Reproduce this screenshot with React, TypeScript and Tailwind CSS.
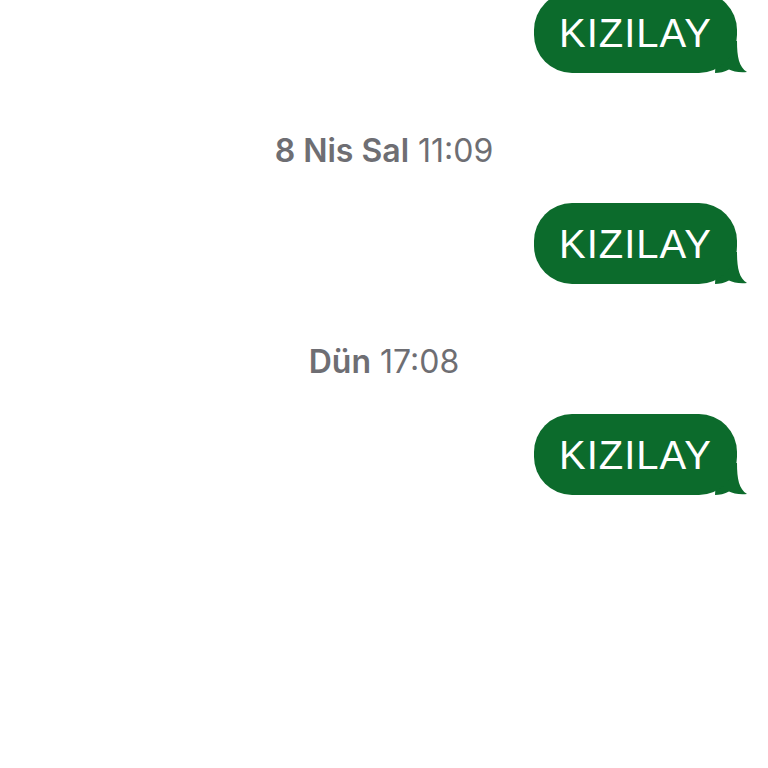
import React from "react";

const Bubble = ({ text }: { text: string }) => {
  return (
    <div className="flex justify-end pr-[31px]">
      <div className="relative">
        <div className="relative z-10 flex items-center h-[81px] px-[25px] rounded-[38px] bg-[#0c6b2c] text-white text-[40px] leading-none tracking-[1px]">
          {text}
        </div>
        {/* tail */}
        <svg
          className="absolute -right-[10px] bottom-0 z-0"
          width="32"
          height="32"
          viewBox="0 0 32 32"
        >
          <path
            d="M2 0 L22 0 C22 16 24 26 32 31 C25 32 18 30.5 14 28.5 C10 31 4 32 0 32 Z"
            fill="#0c6b2c"
          />
        </svg>
      </div>
    </div>
  );
};

const Stamp = ({ day, time }: { day: string; time: string }) => {
  return (
    <div className="pt-[59px] pb-[33px] text-center text-[32px] leading-[38px] text-[#6e6e73] font-['Inter',sans-serif]">
      <span className="font-semibold">{day}</span> <span>{time}</span>
    </div>
  );
};

export default function App() {
  return (
    <div className="w-[768px] h-[768px] overflow-hidden bg-white font-['Liberation_Sans',Arial,sans-serif]">
      <div className="-mt-[8px]">
        <Bubble text="KIZILAY" />
        <Stamp day="8 Nis Sal" time="11:09" />
        <Bubble text="KIZILAY" />
        <Stamp day="Dün" time="17:08" />
        <Bubble text="KIZILAY" />
      </div>
    </div>
  );
}
